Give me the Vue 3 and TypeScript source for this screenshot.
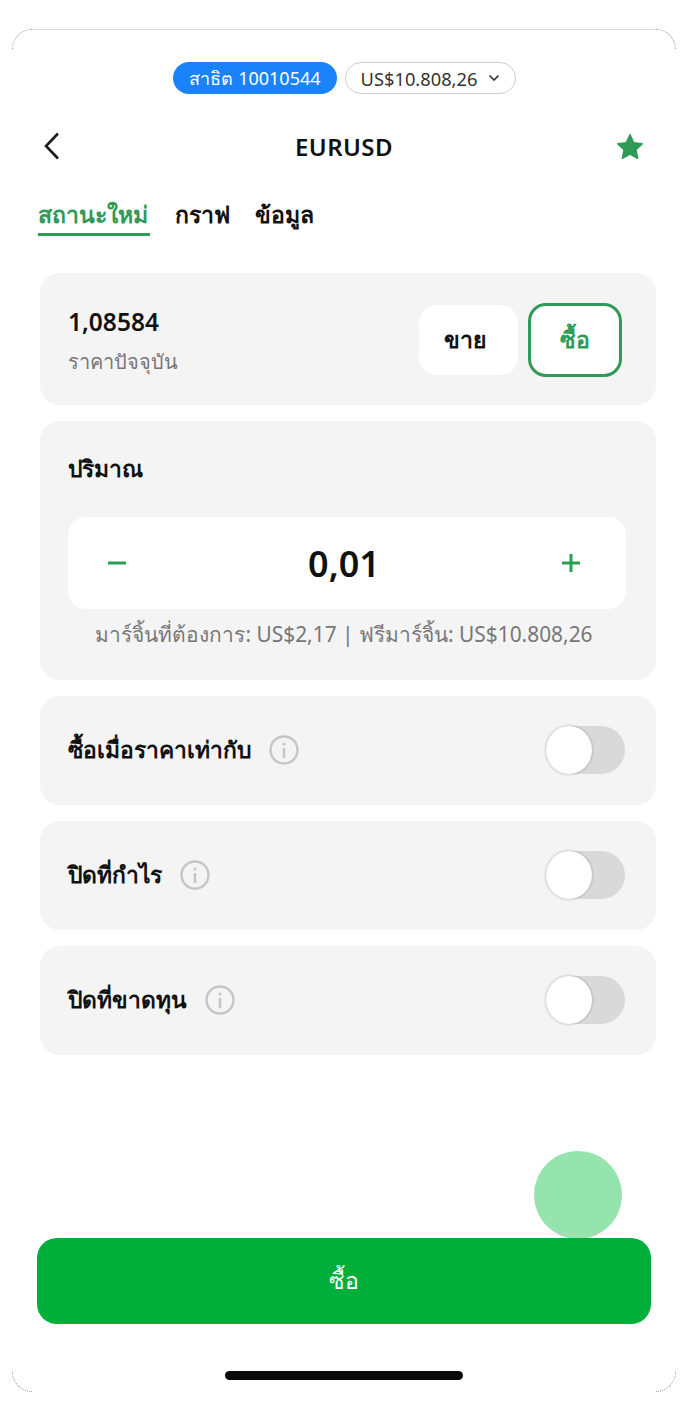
<script setup lang="ts">
const toggles = [
  { label: "ซื้อเมื่อราคาเท่ากับ" },
  { label: "ปิดที่กำไร" },
  { label: "ปิดที่ขาดทุน" },
];
const corners = ["tl", "tr", "bl", "br"];
</script>

<template>
  <div class="screen">
    <div class="phone">
      <span v-for="c in corners" :key="c" class="corner" :class="c"></span>

      <div class="account">
        <span class="pill-demo">สาธิต 10010544</span>
        <span class="pill-balance">
          US$10.808,26
          <svg width="12" height="8" viewBox="0 0 12 8">
            <path d="M1.500 1.500 6 6l4.500-4.500" fill="none" stroke="#333" stroke-width="1.6" />
          </svg>
        </span>
      </div>

      <div class="header">
        <svg class="back" width="16" height="28" viewBox="0 0 16 28">
          <path d="M14 1.500 2 14l12 12.500" fill="none" stroke="#1a1a1a" stroke-width="2.6" />
        </svg>
        <span class="symbol">EURUSD</span>
        <svg class="star" width="28" height="27" viewBox="0 0 24 23">
          <path
            d="M12 1.500l3.100 6.800 7.300.9-5.400 5 1.500 7.300L12 18l-6.500 3.500L7 14.200l-5.400-5 7.300-.9z"
            fill="#2e9b56"
            stroke="#2e9b56"
            stroke-width="1.4"
            stroke-linejoin="round"
          />
        </svg>
      </div>

      <div class="tabs">
        <span class="tab active">สถานะใหม่</span>
        <span class="tab">กราฟ</span>
        <span class="tab">ข้อมูล</span>
      </div>

      <div class="cards">
        <section class="card price-card">
          <div>
            <div class="price">1,08584</div>
            <div class="price-label">ราคาปัจจุบัน</div>
          </div>
          <div class="sides">
            <span class="side sell">ขาย</span>
            <span class="side buy">ซื้อ</span>
          </div>
        </section>

        <section class="card volume-card">
          <div class="row-label">ปริมาณ</div>
          <div class="stepper">
            <svg width="18" height="18" viewBox="0 0 18 18">
              <path d="M0 9h18" stroke="#27a04f" stroke-width="3" />
            </svg>
            <span class="amount">0,01</span>
            <svg width="18" height="18" viewBox="0 0 18 18">
              <path d="M0 9h18M9 0v18" stroke="#27a04f" stroke-width="3" />
            </svg>
          </div>
          <div class="margin">มาร์จิ้นที่ต้องการ: US$2,17 | ฟรีมาร์จิ้น: US$10.808,26</div>
        </section>

        <section v-for="t in toggles" :key="t.label" class="card toggle-card">
          <span class="row-label">{{ t.label }}</span>
          <svg width="30" height="30" viewBox="0 0 30 30">
            <circle cx="15" cy="15" r="13.500" fill="none" stroke="#c6c6c6" stroke-width="2.4" />
            <circle cx="15" cy="9" r="1.500" fill="#c6c6c6" />
            <path d="M15 13v10" stroke="#c6c6c6" stroke-width="2.6" />
          </svg>
          <span class="switch"><span class="knob"></span></span>
        </section>
      </div>

      <div class="footer">
        <div class="touch"></div>
        <button class="submit">ซื้อ</button>
        <div class="home-bar"></div>
      </div>
    </div>
  </div>
</template>

<style scoped>
.screen {
  width: 688px;
  height: 1416px;
  padding: 29px 12px 24px;
  box-sizing: border-box;
  background: #fff;
  font-family: "Noto Sans", "Open Sans", sans-serif;
  color: #111;
}

.phone {
  position: relative;
  height: 100%;
  box-sizing: border-box;
  border: 1px solid transparent;
  display: flex;
  flex-direction: column;
}

/* hairline of the device frame, only the top edge is solid */
.phone::before {
  content: "";
  position: absolute;
  top: -1px;
  left: 20px;
  right: 20px;
  height: 1px;
  background: #d8d8d8;
}

.corner {
  position: absolute;
  width: 20px;
  height: 20px;
  box-sizing: border-box;
  border: 0 dotted #999;
}

.tl {
  top: -1px;
  left: -1px;
  border-top-width: 1px;
  border-left-width: 1px;
  border-top-left-radius: 20px;
}

.tr {
  top: -1px;
  right: -1px;
  border-top-width: 1px;
  border-right-width: 1px;
  border-top-right-radius: 20px;
}

.bl {
  bottom: -1px;
  left: -1px;
  border-bottom-width: 1px;
  border-left-width: 1px;
  border-bottom-left-radius: 20px;
}

.br {
  bottom: -1px;
  right: -1px;
  border-bottom-width: 1px;
  border-right-width: 1px;
  border-bottom-right-radius: 20px;
}

.account {
  display: flex;
  justify-content: center;
  gap: 8px;
  margin-top: 32px;
  margin-left: 1px;
}

.pill-demo,
.pill-balance {
  height: 32px;
  box-sizing: border-box;
  border-radius: 16px;
  display: flex;
  align-items: center;
  justify-content: center;
}

.pill-demo {
  width: 164px;
  font-size: 18px;
  background: #1a82fb;
  color: #fff;
}

.pill-balance {
  width: 171px;
  font-size: 18.300px;
  gap: 11px;
  border: 1px solid #cfcfcf;
  color: #333;
}

.header {
  display: grid;
  grid-template-columns: 1fr auto 1fr;
  align-items: center;
  margin: 22px 31px 0 31px;
  height: 60px;
}

.star {
  justify-self: end;
}

.symbol {
  font-size: 24px;
  font-weight: 600;
  letter-spacing: 0.4px;
}

.tabs {
  display: flex;
  gap: 25px;
  margin: 21px 0 0 25px;
}

.tab {
  font-size: 23px;
  font-weight: 700;
  height: 39px;
  line-height: 34px;
}

.tab.active {
  width: 112px;
  white-space: nowrap;
  color: #2e9b56;
  height: 36px;
  border-bottom: 3px solid #2e9b56;
}

.cards {
  display: flex;
  flex-direction: column;
  gap: 16px;
  margin: 37px 19px 0 27px;
}

.card {
  background: #f4f4f4;
  border-radius: 20px;
  box-sizing: border-box;
  padding: 0 28px;
}

.price-card {
  height: 132px;
  padding-right: 34px;
  padding-top: 4px;
  display: flex;
  align-items: center;
  justify-content: space-between;
}

.price {
  font-size: 24.500px;
  font-weight: 600;
}

.price-label {
  font-size: 20px;
  color: #777;
  margin-top: 8px;
}

.sides {
  display: flex;
  gap: 10px;
  align-items: center;
  margin-top: -2px;
}

.side {
  border-radius: 18px;
  display: flex;
  align-items: center;
  justify-content: center;
  font-size: 23px;
  font-weight: 700;
  background: #fff;
  box-sizing: border-box;
}

.sell {
  width: 99px;
  height: 70px;
  padding-right: 8px;
}

.buy {
  width: 94px;
  height: 74px;
  color: #2e9b56;
  border: 3px solid #2e9b56;
}

.volume-card {
  height: 259px;
  padding-top: 30px;
}

.row-label {
  font-size: 22.800px;
  font-weight: 600;
}

.stepper {
  margin-top: 30px;
  height: 92px;
  margin-right: 2px;
  background: #fff;
  border-radius: 18px;
  display: flex;
  align-items: center;
  justify-content: space-between;
  padding: 0 46px 0 40px;
}

.amount {
  font-size: 36px;
  font-weight: 600;
}

.margin {
  margin-top: 9px;
  padding-right: 8px;
  text-align: center;
  font-size: 20.900px;
  white-space: nowrap;
  color: #777;
}

.toggle-card {
  height: 109px;
  display: flex;
  align-items: center;
  gap: 18px;
  padding-bottom: 2px;
}

.switch {
  margin-left: auto;
  margin-right: 3px;
  width: 79px;
  height: 48px;
  border-radius: 24px;
  background: #d9d9d9;
  display: flex;
  align-items: center;
}

.knob {
  width: 46px;
  height: 48px;
  border-radius: 50%;
  background: #fff;
  box-shadow: 0 0 3px rgba(0, 0, 0, 0.3);
}

.footer {
  margin-top: auto;
  position: relative;
  display: flex;
  flex-direction: column;
  align-items: center;
}

.touch {
  position: absolute;
  left: 521px;
  top: -87px;
  width: 88px;
  height: 88px;
  border-radius: 50%;
  background: #95e4ae;
}

.submit {
  position: relative;
  width: 614px;
  height: 86px;
  margin-left: -1px;
  border: none;
  border-radius: 20px;
  background: #00af3a;
  color: #fff;
  font-family: inherit;
  font-size: 23px;
  font-weight: 500;
}

.home-bar {
  width: 238px;
  height: 9px;
  margin: 47px 0 11px;
  border-radius: 5px;
  background: #0a0a0a;
}
</style>
